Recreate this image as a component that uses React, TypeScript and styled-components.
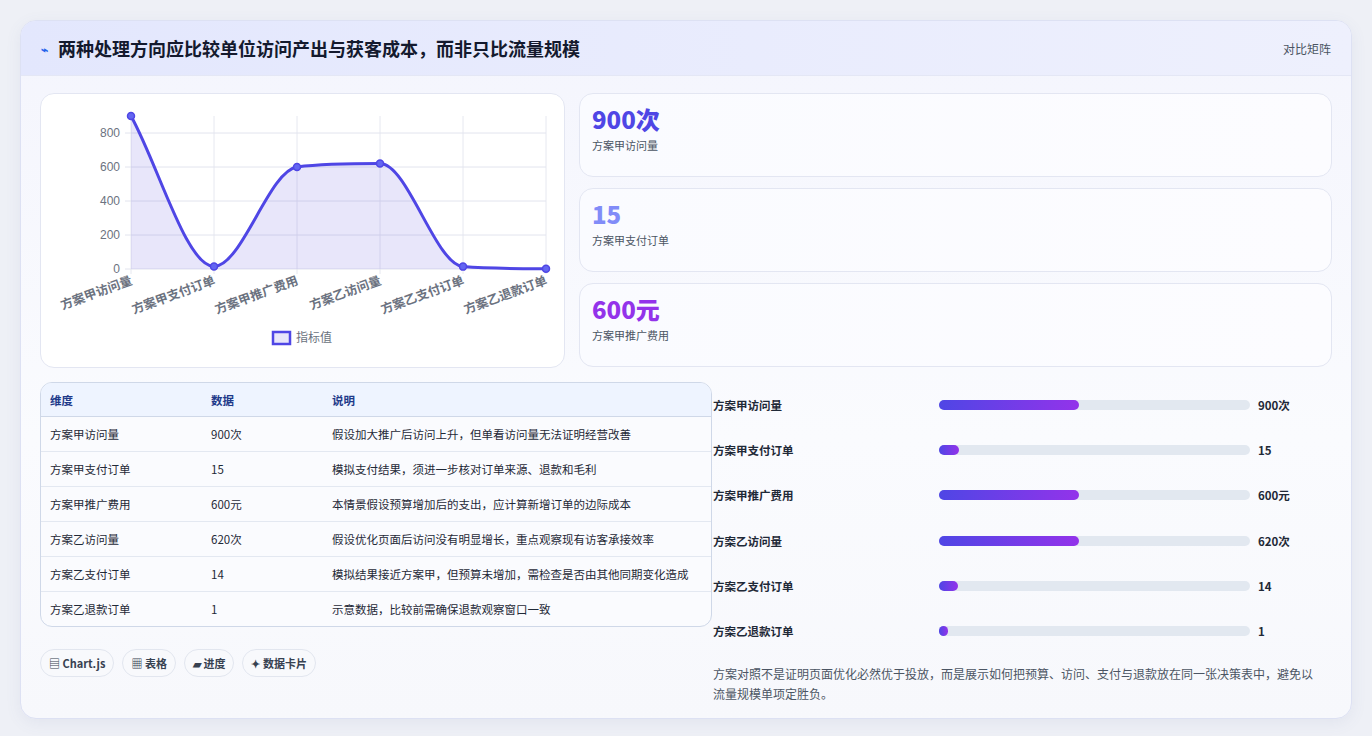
import styled, { createGlobalStyle } from 'styled-components';

const Global = createGlobalStyle`
  body { margin: 0; background: #eef0f6; font-family: "Noto Sans CJK SC", "Noto Sans", sans-serif; }
`;

const ROWS = [
  { name: '方案甲访问量', value: '900次', bar: 45, note: '假设加大推广后访问上升，但单看访问量无法证明经营改善' },
  { name: '方案甲支付订单', value: '15', bar: 6.5, note: '模拟支付结果，须进一步核对订单来源、退款和毛利' },
  { name: '方案甲推广费用', value: '600元', bar: 45, note: '本情景假设预算增加后的支出，应计算新增订单的边际成本' },
  { name: '方案乙访问量', value: '620次', bar: 45, note: '假设优化页面后访问没有明显增长，重点观察现有访客承接效率' },
  { name: '方案乙支付订单', value: '14', bar: 6, note: '模拟结果接近方案甲，但预算未增加，需检查是否由其他同期变化造成' },
  { name: '方案乙退款订单', value: '1', bar: 3, note: '示意数据，比较前需确保退款观察窗口一致' },
];

const STATS = [
  { value: '900次', label: '方案甲访问量', color: '#4f46e5' },
  { value: '15', label: '方案甲支付订单', color: '#818cf8' },
  { value: '600元', label: '方案甲推广费用', color: '#9333ea' },
];

const Page = styled.div`
  padding: 20px 20px 22px 20px;
`;

const Card = styled.div`
  background: linear-gradient(180deg, #f4f5fd 0%, #fafbfe 60%, #f7f8fc 100%);
  border: 1px solid #dde1f3;
  border-radius: 16px;
  overflow: hidden;
  box-shadow: 0 4px 16px rgba(90, 100, 150, 0.08);
`;

const Header = styled.div`
  height: 54px;
  display: flex;
  align-items: center;
  justify-content: space-between;
  padding: 0 20px;
  background: linear-gradient(90deg, #e3e7fd 0%, #eef0fd 100%);
  border-bottom: 1px solid #e4e7f5;
`;

const Title = styled.h1`
  margin: 0;
  font-size: 18px;
  font-weight: 700;
  color: #141a2e;
  display: flex;
  align-items: center;
  gap: 10px;
`;

const Icon = styled.span`
  color: #2563eb;
  font-size: 12px;
`;

const Tag = styled.span`
  font-size: 12px;
  color: #4b5563;
`;

const Body = styled.div`
  padding: 17px 19px 14px 19px;
  display: flex;
  flex-direction: column;
  gap: 14px;
`;

const Row = styled.div<{ $left: number }>`
  display: grid;
  grid-template-columns: ${(p) => p.$left}px 1fr;
  column-gap: 14px;
`;

const Panel = styled.div`
  background: #fff;
  border: 1px solid #e3e6f2;
  border-radius: 14px;
`;

const ChartPanel = styled(Panel)`
  height: 273px;
`;

const Stats = styled.div`
  display: flex;
  flex-direction: column;
  gap: 11px;
`;

const Stat = styled(Panel)`
  height: 84px;
  box-sizing: border-box;
  padding: 9px 12px;
  background: linear-gradient(90deg, #fafbff, #fcfcff);
`;

const StatValue = styled.div<{ $c: string }>`
  font-size: 24px;
  font-weight: 800;
  color: ${(p) => p.$c};
  line-height: 32px;
`;

const StatLabel = styled.div`
  font-size: 11px;
  color: #4b5563;
  margin-top: 2px;
`;

const Left = styled.div`
  display: flex;
  flex-direction: column;
  gap: 22px;
`;

const Table = styled.table`
  width: 100%;
  border-collapse: separate;
  border-spacing: 0;
  border: 1px solid #cfd8e8;
  border-radius: 12px;
  overflow: hidden;
  font-size: 11.5px;
  background: #fafbfe;
  th {
    text-align: left;
    font-weight: 600;
    color: #1e3a8a;
    background: #eef4ff;
    height: 33px;
    padding: 0 9px;
    border-bottom: 1px solid #cfd8e8;
  }
  td {
    color: #1f2937;
    padding: 8px 9px;
    line-height: 18px;
    vertical-align: top;
    border-bottom: 1px solid #e3e8f1;
  }
  tr:last-child td { border-bottom: none; }
`;

const Chips = styled.div`
  display: flex;
  gap: 8px;
`;

const Chip = styled.span`
  font-size: 11px;
  font-weight: 600;
  color: #374151;
  border: 1px solid #e2e6ef;
  background: #f8f9fc;
  border-radius: 14px;
  padding: 5px 8px;
`;

const Right = styled.div`
  padding: 0 0 0 0;
  margin-left: -13px;
`;

const BarRow = styled.div`
  display: grid;
  grid-template-columns: 218px 311px 1fr;
  align-items: center;
  column-gap: 8px;
  height: 45.3px;
  font-size: 11.5px;
  font-weight: 600;
  color: #1f2937;
`;

const Track = styled.div`
  height: 10px;
  border-radius: 5px;
  background: #e2e8f0;
`;

const Fill = styled.div`
  height: 100%;
  border-radius: 5px;
  background: linear-gradient(90deg, #4f46e5, #9333ea);
`;

const Note = styled.p`
  margin: 10px 0 0;
  font-size: 12px;
  line-height: 20px;
  color: #4b5563;
  padding-right: 14px;
`;

const PTS = [900, 15, 600, 620, 14, 1].map((v, i) => ({ x: 90 + i * 83, y: 175 - v * 0.17 }));

// monotone cubic (Fritsch-Carlson)
function curve() {
  const n = PTS.length;
  const d: number[] = [];
  for (let i = 0; i < n - 1; i++) d.push((PTS[i + 1].y - PTS[i].y) / (PTS[i + 1].x - PTS[i].x));
  const m: number[] = [];
  for (let i = 0; i < n; i++) {
    if (i === 0) m.push(d[0]);
    else if (i === n - 1) m.push(d[n - 2]);
    else m.push(d[i - 1] * d[i] <= 0 ? 0 : (d[i - 1] + d[i]) / 2);
  }
  for (let i = 0; i < n - 1; i++) {
    if (d[i] === 0) { m[i] = 0; m[i + 1] = 0; continue; }
    const a = m[i] / d[i];
    const b = m[i + 1] / d[i];
    const s = a * a + b * b;
    if (s > 9) {
      const t = 3 / Math.sqrt(s);
      m[i] = t * a * d[i];
      m[i + 1] = t * b * d[i];
    }
  }
  let path = `M${PTS[0].x},${PTS[0].y}`;
  for (let i = 0; i < n - 1; i++) {
    const h = (PTS[i + 1].x - PTS[i].x) / 3;
    path += ` C${PTS[i].x + h},${PTS[i].y + m[i] * h} ${PTS[i + 1].x - h},${PTS[i + 1].y - m[i + 1] * h} ${PTS[i + 1].x},${PTS[i + 1].y}`;
  }
  return path;
}

function Chart() {
  const d = curve();
  const grid = [0, 200, 400, 600, 800];
  return (
    <svg width="524" height="273" style={{ display: 'block' }}>
      {PTS.map((p) => (
        <line key={p.x} x1={p.x} x2={p.x} y1={22} y2={180} stroke="#e6e8f0" />
      ))}
      {grid.map((g) => (
        <g key={g}>
          <line x1={84} x2={505} y1={175 - g * 0.17} y2={175 - g * 0.17} stroke="#e2e4ee" />
          <text x={79} y={179 - g * 0.17} fontSize="12" fill="#6b7280" textAnchor="end" fontFamily="Liberation Sans, sans-serif">{g}</text>
        </g>
      ))}
      <path d={`${d} L${PTS[5].x},175 L${PTS[0].x},175 Z`} fill="rgba(99,85,220,0.15)" />
      <path d={d} fill="none" stroke="#4f46e5" strokeWidth="3" />
      {PTS.map((p) => (
        <circle key={p.x} cx={p.x} cy={p.y} r="3.5" fill="#6366f1" stroke="#4f46e5" strokeWidth="1.5" />
      ))}
      {ROWS.map((r, i) => (
        <text key={r.name} x={PTS[i].x + 2} y={190} fontSize="12.5" fill="#6b7280" fontWeight="600" textAnchor="end" transform={`rotate(-20 ${PTS[i].x + 2} 190)`}>{r.name}</text>
      ))}
      <rect x={232} y={238} width={17} height={12} fill="rgba(99,85,220,0.15)" stroke="#4f46e5" strokeWidth="2.5" />
      <text x={255} y={248} fontSize="12" fill="#6b7280">指标值</text>
    </svg>
  );
}

export default function App() {
  return (
    <Page>
      <Global />
      <Card>
        <Header>
          <Title><Icon>⌁</Icon>两种处理方向应比较单位访问产出与获客成本，而非只比流量规模</Title>
          <Tag>对比矩阵</Tag>
        </Header>
        <Body>
          <Row $left={525}>
            <ChartPanel><Chart /></ChartPanel>
            <Stats>
              {STATS.map((s) => (
                <Stat key={s.label}>
                  <StatValue $c={s.color}>{s.value}</StatValue>
                  <StatLabel>{s.label}</StatLabel>
                </Stat>
              ))}
            </Stats>
          </Row>
          <Row $left={672}>
            <Left>
              <Table>
                <thead>
                  <tr><th style={{ width: 143 }}>维度</th><th style={{ width: 103 }}>数据</th><th>说明</th></tr>
                </thead>
                <tbody>
                  {ROWS.map((r) => (
                    <tr key={r.name}><td>{r.name}</td><td>{r.value}</td><td>{r.note}</td></tr>
                  ))}
                </tbody>
              </Table>
              <Chips>
                <Chip>▤ Chart.js</Chip>
                <Chip>▦ 表格</Chip>
                <Chip>▰ 进度</Chip>
                <Chip>✦ 数据卡片</Chip>
              </Chips>
            </Left>
            <Right>
              {ROWS.map((r) => (
                <BarRow key={r.name}>
                  <span>{r.name}</span>
                  <Track><Fill style={{ width: `${r.bar}%` }} /></Track>
                  <span>{r.value}</span>
                </BarRow>
              ))}
              <Note>方案对照不是证明页面优化必然优于投放，而是展示如何把预算、访问、支付与退款放在同一张决策表中，避免以流量规模单项定胜负。</Note>
            </Right>
          </Row>
        </Body>
      </Card>
    </Page>
  );
}
